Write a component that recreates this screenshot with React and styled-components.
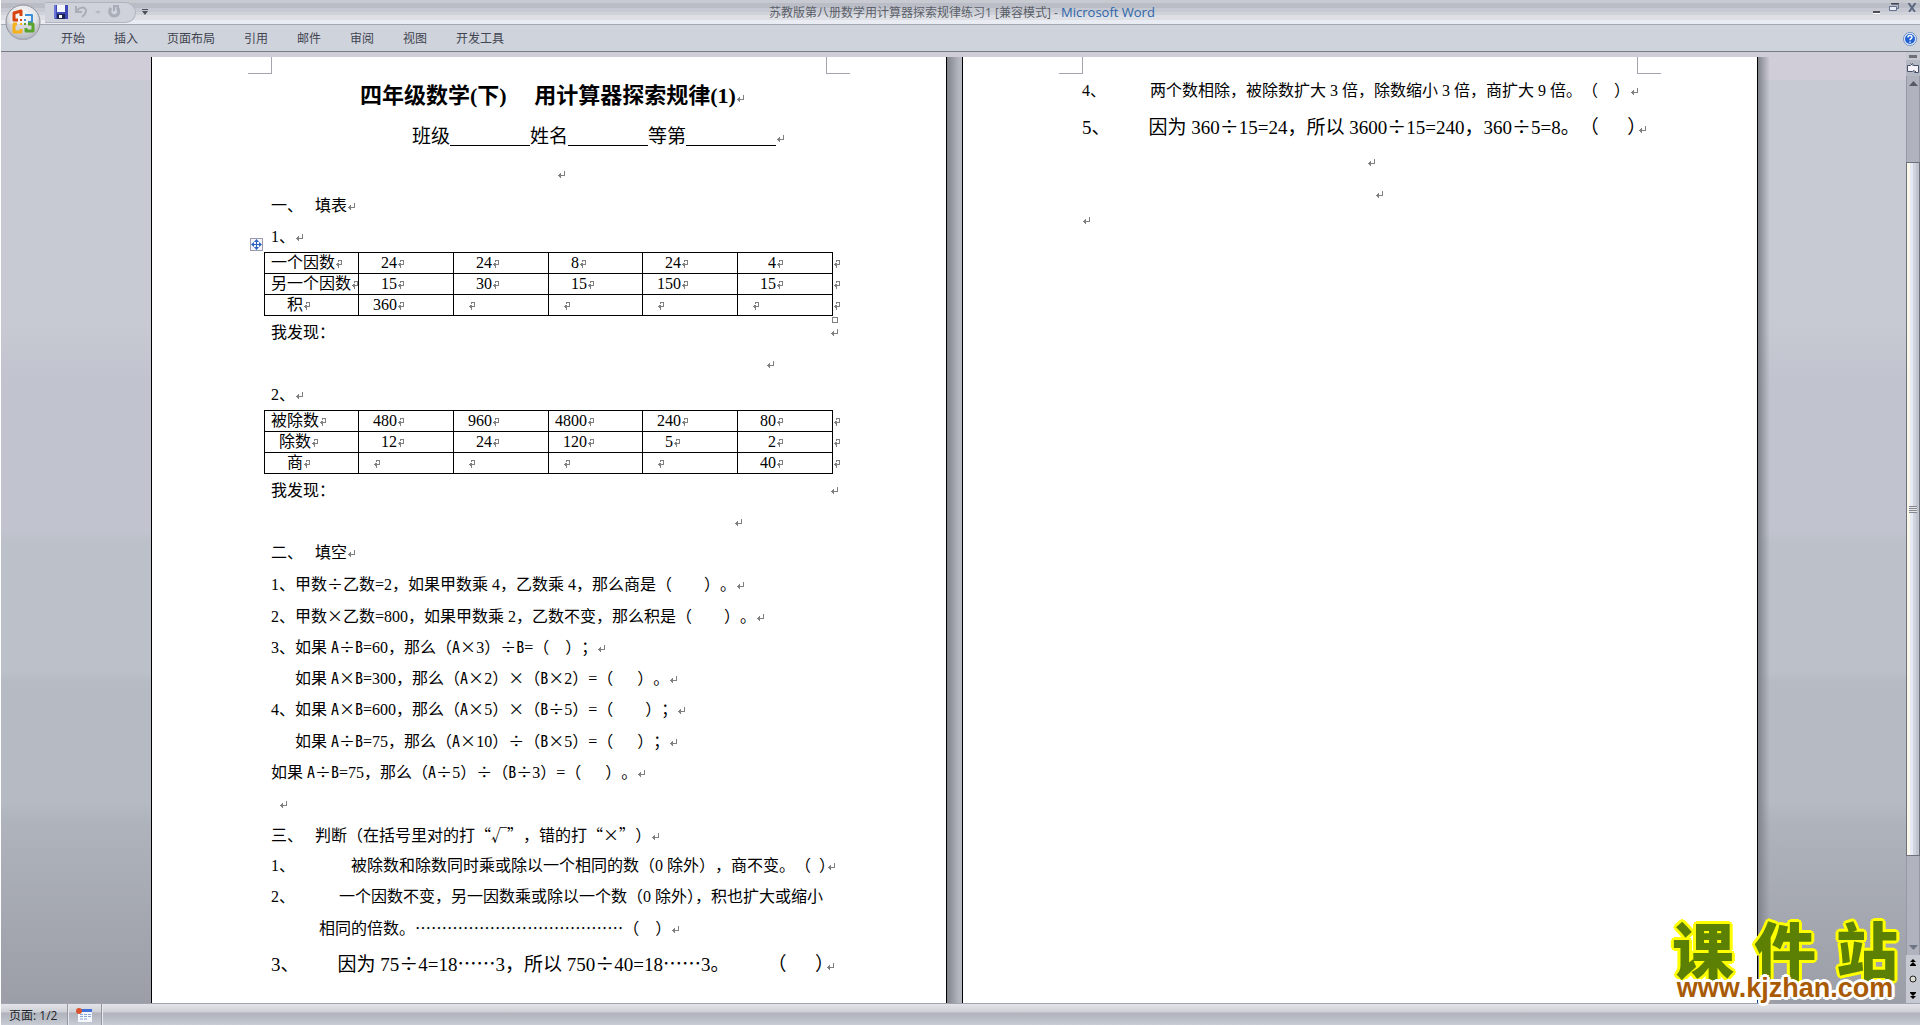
import styled, { createGlobalStyle, css } from "styled-components";

const GlobalStyle = createGlobalStyle`
  * {
    box-sizing: border-box;
  }
  body {
    margin: 0;
    overflow: hidden;
    font-family: "Open Sans", "Noto Sans CJK SC", sans-serif;
    font-size: 12px;
    color: #3f4450;
  }
  button {
    border: none;
    background: none;
    padding: 0;
    font: inherit;
    color: inherit;
    cursor: pointer;
  }
`;

const tabs = [
  "开始",
  "插入",
  "页面布局",
  "引用",
  "邮件",
  "审阅",
  "视图",
  "开发工具",
];

const factorRows = [
  ["一个因数", "  24", "  24", "  8", "  24", "   4"],
  ["另一个因数", "  15", "  30", "  15", " 150", "  15"],
  ["  积", " 360", " ", " ", " ", " "],
];

const divisionRows = [
  ["被除数", " 480", " 960", "4800", " 240", "  80"],
  [" 除数", "  12", "  24", " 120", "  5", "   2"],
  ["  商", " ", " ", " ", " ", "  40"],
];

function OfficeLogo() {
  return (
    <svg width="36" height="37" viewBox="0 0 36 37">
      <defs>
        <radialGradient id="orb" cx="50%" cy="35%" r="65%">
          <stop offset="0" stopColor="#ffffff" />
          <stop offset="0.6" stopColor="#e3e4e8" />
          <stop offset="1" stopColor="#a9acb4" />
        </radialGradient>
      </defs>
      <circle cx="18" cy="19" r="17" fill="#8b8e96" />
      <circle cx="18" cy="18" r="17" fill="url(#orb)" stroke="#8f929a" />
      <path d="M2 20h32a16 16 0 0 1-32 0z" fill="#c4c6cd" opacity="0.5" />
      <g fill="none" strokeWidth="3" strokeLinejoin="round">
        <path d="M13 16H9V9l7-2v5" stroke="#d8440f" />
        <path d="M20 11h7v7h-4" stroke="#3d8fd6" strokeWidth="2" />
        <path d="M12 20H9v8h7v-3" stroke="#f5b01a" />
        <path d="M23 20h5v7h-7v-3" stroke="#57a32c" />
      </g>
      <g>
        <rect x="15" y="15" width="2" height="2" fill="#d8440f" />
        <rect x="19" y="15" width="2" height="2" fill="#3d8fd6" />
        <rect x="15" y="19" width="2" height="2" fill="#f5b01a" />
        <rect x="19" y="19" width="2" height="2" fill="#57a32c" />
      </g>
    </svg>
  );
}

function SaveIcon() {
  return (
    <svg width="14" height="14" viewBox="0 0 14 14">
      <path d="M0 0h14v14H1l-1-1z" fill="#3d48b5" />
      <path d="M0 0h2v13H0z" fill="#6a76d8" />
      <path d="M3 0h8v7H3z" fill="#f4f6ff" />
      <path d="M3 9h8v5H3z" fill="#1d2350" />
      <path d="M5 10h3v3H5z" fill="#ffffff" />
    </svg>
  );
}

function UndoIcon() {
  return (
    <svg width="13" height="13" viewBox="0 0 13 13" fill="none" stroke="#a9adb8">
      <path d="M1 1v6h6" strokeWidth="2" />
      <path d="M2 6c2-4 9-5 9 0 0 3-2 4-4 6" strokeWidth="2" />
    </svg>
  );
}

function RedoIcon() {
  return (
    <svg width="13" height="13" viewBox="0 0 13 13" fill="none" stroke="#a9adb8">
      <path d="M3 3c-3 4 0 8 3 8 5 0 6-5 3-9" strokeWidth="3" />
      <path d="M6 6V1h5" strokeWidth="2" />
    </svg>
  );
}

function ReturnMark({ tuck }) {
  return (
    <Mark $tuck={tuck} width="8" height="8" viewBox="0 0 8 8">
      <path d="M7.5 0v4.5H2M3.5 2v5M2.5 3v3M1.5 4v1" />
    </Mark>
  );
}

function CellMark() {
  return (
    <Mark width="8" height="8" viewBox="0 0 8 8">
      <path d="M3.5 2V.5h3v4H2M3.5 2.500v5M2.500 3v3M1.5 4v1" />
    </Mark>
  );
}

// Latin letters take half a character and operators a whole one
function Text({ children }) {
  return children.split(/([AB]+|[÷×…“”√])/).map((part, i) => {
    if (/^[AB]/.test(part)) return <Half key={i}>{part}</Half>;
    if (/^[÷×…“”√]/.test(part)) return <Wide key={i}>{part}</Wide>;
    return part;
  });
}

function Para({ children = "", line, size, indent, space, open, tuck, trim }) {
  return (
    <Line
      $line={line}
      $size={size}
      $indent={indent}
      $space={space}
      $trim={trim}
    >
      <Text>{children}</Text>
      {!open && <ReturnMark tuck={tuck} />}
    </Line>
  );
}

function Sheet({ rows, label, active }) {
  return (
    <TableWrap>
      {active && (
        <MoveHandle aria-label="移动表格">
          <svg width="11" height="11" viewBox="0 0 11 11" fill="#2a62c4">
            <path d="M5 1h1v9H5zM1 5h9v1H1zM5.500 0l2.500 3H3zM5.500 11L3 8h5zM0 5.500L3 3v5zM11 5.500L8 8V3z" />
          </svg>
        </MoveHandle>
      )}
      <Table aria-label={label}>
        <colgroup>
          <col width="94" />
          <col width="95" />
          <col width="95" />
          <col width="94" />
          <col width="95" />
          <col width="95" />
          <col width="16" />
        </colgroup>
        <tbody>
          {rows.map((row) => (
            <tr key={row[0]}>
              {row.map((cell, i) => (
                <Cell key={i}>
                  {cell.replace(/ /g, "  ")}
                  <CellMark />
                </Cell>
              ))}
              <RowEnd>
                <CellMark />
              </RowEnd>
            </tr>
          ))}
        </tbody>
      </Table>
      {active && <SizeHandle />}
    </TableWrap>
  );
}

function Finding() {
  return (
    <FindingLine>
      <span>我发现：</span>
      <ReturnMark />
    </FindingLine>
  );
}

function App() {
  return (
    <Window>
      <GlobalStyle />
      <TitleBar>
        <QuickAccess>
          <button aria-label="保存">
            <SaveIcon />
          </button>
          <button aria-label="撤消">
            <UndoIcon />
          </button>
          <SmallArrow $color="#b4b7c0" />
          <button aria-label="恢复">
            <RedoIcon />
          </button>
        </QuickAccess>
        <MoreButton aria-label="自定义快速访问工具栏">
          <svg width="6" height="6" viewBox="0 0 6 6" fill="#4c505a">
            <path d="M0 0h6v1H0zM0 2h6L3 6z" />
          </svg>
        </MoreButton>
        <Caption>
          苏教版第八册数学用计算器探索规律练习1 [兼容模式] -{" "}
          <AppName>Microsoft Word</AppName>
        </Caption>
        <WindowButtons>
          <button aria-label="最小化">
            <svg width="9" height="11" viewBox="0 0 9 11">
              <path d="M1 8h7v2H1z" fill="#4b4e57" />
              <path d="M1 10h7v1H1z" fill="#fff" />
            </svg>
          </button>
          <button aria-label="还原">
            <svg width="10" height="9" viewBox="0 0 10 9" fill="none" stroke="#66708a">
              <path d="M2.500 1.500h7v4h-2" />
              <path d="M2 .5h8" stroke="#43464e" />
              <path d="M.5 3.500h7v4h-7z" fill="#e8ecf6" />
            </svg>
          </button>
          <button aria-label="关闭">
            <svg width="10" height="10" viewBox="0 0 10 10" fill="none">
              <path d="M1 10h3M6 10h3" stroke="#fff" />
              <path d="M1.500 0l6.500 9M8.500 0L2 9" stroke="#5c6580" strokeWidth="2" />
            </svg>
          </button>
        </WindowButtons>
      </TitleBar>
      <OfficeButton aria-label="Office 按钮">
        <OfficeLogo />
      </OfficeButton>

      <Ribbon>
        {tabs.map((tab) => (
          <Tab key={tab}>{tab}</Tab>
        ))}
        <HelpButton aria-label="帮助">
          <svg width="14" height="14" viewBox="0 0 14 14">
            <circle cx="7" cy="7" r="6.500" fill="#e9f1ff" stroke="#6f8fc0" />
            <circle cx="7" cy="7" r="5" fill="#1f5fd0" />
            <path
              d="M5 5.500c0-2.500 4-2.500 4-.3C9 6.700 7 6.700 7 8.300M7 9.500v1.300"
              fill="none"
              stroke="#fff"
              strokeWidth="1.500"
            />
          </svg>
        </HelpButton>
      </Ribbon>

      <Body>
        <Desk>
          <Page>
            <Corner $side="left" />
            <Corner $side="right" />
            <Title>
              <Text>{"四年级数学(下)     用计算器探索规律(1)"}</Text>
              <ReturnMark />
            </Title>
            <Line $line={41} $size={19} $indent={141}>
              班级
              <Blank $w={80} />
              姓名
              <Blank $w={80} />
              等第
              <Blank $w={90} />
              <ReturnMark />
            </Line>
            <Para line={33} indent={286} />
            <Para>一、   填表</Para>
            <Para>1、</Para>
            <Sheet rows={factorRows} label="因数和积" active />
            <Finding />
            <Para indent={495} />
            <Para>2、</Para>
            <Sheet rows={divisionRows} label="被除数、除数和商" />
            <Finding />
            <Para indent={463} />
            <Para>二、   填空</Para>
            <Para>
              {"1、甲数÷乙数=2，如果甲数乘 4，乙数乘 4，那么商是（        ）。"}
            </Para>
            <Para space>
              {"2、甲数×乙数=800，如果甲数乘 2，乙数不变，那么积是（        ）。"}
            </Para>
            <Para>{"3、如果 A÷B=60，那么（A×3）÷B=（    ）；"}</Para>
            <Para>{"      如果 A×B=300，那么（A×2）×（B×2）=（      ）。"}</Para>
            <Para>
              {"4、如果 A×B=600，那么（A×5）×（B÷5）=（        ）；"}
            </Para>
            <Para space>
              {"      如果 A÷B=75，那么（A×10）÷（B×5）=（      ）；"}
            </Para>
            <Para>{"如果 A÷B=75，那么（A÷5）÷（B÷3）=（      ）。"}</Para>
            <Para space indent={8} />
            <Para>{"三、   判断（在括号里对的打“√”，错的打“×”）"}</Para>
            <Para tuck>
              {
                "1、              被除数和除数同时乘或除以一个相同的数（0 除外），商不变。（  ）"
              }
            </Para>
            <Para open trim>
              {
                "2、           一个因数不变，另一因数乘或除以一个数（0 除外），积也扩大或缩小"
              }
            </Para>
            <Para>
              {"            相同的倍数。…………………………………（    ）"}
            </Para>
            <Para line={39} size={19} tuck>
              {
                "3、        因为 75÷4=18……3，所以 750÷40=18……3。        （      ）"
              }
            </Para>
          </Page>
          <Gutter />
          <Page>
            <Corner $side="left" />
            <Corner $side="right" />
            <Para>
              {
                "4、           两个数相除，被除数扩大 3 倍，除数缩小 3 倍，商扩大 9 倍。（    ）"
              }
            </Para>
            <Para line={39} size={19} tuck>
              {
                "5、        因为 360÷15=24，所以 3600÷15=240，360÷5=8。（      ）"
              }
            </Para>
            <Para line={33} indent={285} />
            <Para indent={293} />
            <Para line={21} />
          </Page>
          <Gutter $fade />
        </Desk>
        <ScrollColumn>
          <SplitHandle />
          <RulerButton aria-label="标尺">
            <svg width="12" height="12" viewBox="0 0 12 12" fill="#f5f2fa" stroke="#46506a">
              <path d="M.5 3.500h3l2-2 1 2h5v7h-4l-1-2-1 1h-5z" />
              <path d="M3.500 1.500l2 2M7.500 8.500l2 2" />
            </svg>
          </RulerButton>
          <Track>
            <Arrow aria-label="向上滚动">
              <svg width="9" height="5" viewBox="0 0 9 5" fill="#555a66">
                <path d="M4.500 0L9 5H0z" />
              </svg>
            </Arrow>
            <Thumb>
              <Grip />
            </Thumb>
            <Arrow aria-label="向下滚动">
              <svg width="9" height="5" viewBox="0 0 9 5" fill="#6d7484">
                <path d="M0 0h9L4.500 5z" />
              </svg>
            </Arrow>
          </Track>
          <Browse>
            <button aria-label="前一页">
              <svg width="6" height="7" viewBox="0 0 6 7">
                <path d="M3 0l3 3H0zM3 3l3 3H0zM0 6h6v1H0z" />
              </svg>
            </button>
            <button aria-label="选择浏览对象">
              <svg width="8" height="8" viewBox="0 0 8 8">
                <circle cx="4" cy="4" r="3" fill="#d9dbd4" stroke="#222" />
              </svg>
            </button>
            <button aria-label="下一页">
              <svg width="6" height="7" viewBox="0 0 6 7">
                <path d="M3 7L0 4h6zM3 4L0 1h6zM0 0h6v1H0z" />
              </svg>
            </button>
          </Browse>
        </ScrollColumn>
      </Body>

      <StatusBar>
        <StatusItem $w={67}>页面: 1/2</StatusItem>
        <StatusItem $w={34}>
          <svg width="16" height="14" viewBox="0 0 16 14">
            <path d="M2 1h14v13H2z" fill="#f4f7fd" />
            <path d="M2 1h14v3H2z" fill="#3f6fd8" />
            <path
              d="M4 6.500h3M8 6.500h3M12 6.500h3M4 8.500h3M8 8.500h3M12 8.500h3M4 11h3M8 11h3"
              stroke="#8aa5d8"
            />
            <circle cx="3" cy="3" r="3" fill="#d9532c" />
          </svg>
        </StatusItem>
      </StatusBar>

      <Watermark>
        <SiteName>
          <span>课</span>
          <span>件</span>
          <span>站</span>
        </SiteName>
        <SiteUrl>www.kjzhan.com</SiteUrl>
      </Watermark>
    </Window>
  );
}

export default App;

const Window = styled.div`
  position: relative;
  display: flex;
  flex-direction: column;
  height: 100vh;
  border-left: 1px solid #fdfdfd;
  background-color: #d0cdd8;
`;

const TitleBar = styled.header`
  display: flex;
  align-items: center;
  height: 25px;
  padding-left: 44px;
  border-bottom: 1px solid #a4a7b2;
  background: linear-gradient(
    #c7cad1 0 3px,
    #babdc6 3px 8px,
    #c6c9d1 8px 12px,
    #d0d2d9 12px 15px,
    #dddfe4 15px 20px,
    #eaecf4 20px
  );
`;

const OfficeButton = styled.button`
  position: absolute;
  left: 4px;
  top: 4px;
  height: 37px;
`;

const QuickAccess = styled.div`
  display: flex;
  align-items: center;
  gap: 7px;
  width: 91px;
  height: 21px;
  padding-left: 9px;
  border: 1px solid #b2b5bf;
  border-left: none;
  border-radius: 0 11px 11px 0;
  background-color: #cfd2da;
  button {
    height: 14px;
  }
`;

const SmallArrow = styled.span`
  border: 3px solid transparent;
  border-top-color: ${(props) => props.$color};
  border-bottom: none;
`;

const MoreButton = styled.button`
  display: flex;
  margin-left: 6px;
`;

const Caption = styled.div`
  flex: 1;
  padding-right: 96px;
  text-align: center;
  white-space: pre;
  color: #5b5f69;
  line-height: 24px;
`;

const AppName = styled.span`
  font-size: 13px;
  color: #2c66ab;
`;

const WindowButtons = styled.div`
  display: flex;
  gap: 8px;
  padding-right: 3px;
  height: 18px;
  button {
    display: flex;
    align-items: flex-start;
  }
`;

const Ribbon = styled.nav`
  display: flex;
  align-items: center;
  gap: 29px;
  height: 27px;
  padding: 2px 0 0 60px;
  border-bottom: 1px solid #747a86;
  background-color: #cfd3dc;
`;

const Tab = styled.button`
  line-height: 20px;
`;

const HelpButton = styled.button`
  display: flex;
  margin-left: auto;
  margin-right: 3px;
`;

const Body = styled.div`
  display: flex;
  flex: 1;
  min-height: 0;
`;

const Desk = styled.main`
  display: flex;
  flex: 1;
  justify-content: center;
  padding: 5px 0 0 17px;
  background: linear-gradient(
    #d0cdd8 0 28px,
    #c7cad3 28px 270px,
    #c1c4ce 330px 480px,
    #bbc0c9 490px 620px,
    #b6bac3 630px 750px,
    #afb3bc 770px,
    #9b9ea7
  );
`;

const Page = styled.article`
  position: relative;
  width: 796px;
  padding: 18px 119px;
  border: 1px solid #000;
  border-width: 0 1px;
  background-color: #fff;
  color: #000;
  font-family: "Liberation Serif", "Noto Sans CJK SC", serif;
`;

const Gutter = styled.div`
  width: 15px;
  background: ${(props) =>
    props.$fade
      ? "linear-gradient(to right, #80838a, transparent 12px)"
      : "linear-gradient(to right, #80838a, #b4b7c0 12px)"};
`;

const Corner = styled.span`
  position: absolute;
  top: 0;
  width: 24px;
  height: 17px;
  border-bottom: 1px solid #a4a5b1;
  ${(props) =>
    props.$side === "left"
      ? css`
          left: 96px;
          border-right: 1px solid #a4a5b1;
        `
      : css`
          right: 96px;
          border-left: 1px solid #a4a5b1;
        `}
`;

const Line = styled.p`
  margin: 0;
  padding-left: ${(props) => props.$indent || 0}px;
  padding-top: ${(props) => (props.$space ? 1 : 0)}px;
  height: ${(props) => (props.$line || 31) + (props.$space ? 1 : 0)}px;
  line-height: ${(props) => props.$line || 31}px;
  font-size: ${(props) => props.$size || 16}px;
  white-space: pre;
  text-spacing-trim: ${(props) => (props.$trim ? "normal" : "space-all")};
`;

const Title = styled.h1`
  margin: 0;
  padding-left: 89px;
  height: 41px;
  line-height: 41px;
  font-size: 22px;
  white-space: pre;
`;

const FindingLine = styled(Line)`
  display: flex;
  justify-content: space-between;
  align-items: center;
  margin-right: -11px;
`;

const Blank = styled.span`
  display: inline-block;
  width: ${(props) => props.$w}px;
  height: 16px;
  vertical-align: -3px;
  border-bottom: 1px solid #000;
`;

const Half = styled.span`
  font-family: "Noto Sans CJK SC", sans-serif;
  font-feature-settings: "hwid";
`;

const Wide = styled.span`
  font-family: "Noto Sans CJK SC", sans-serif;
`;

const Mark = styled.svg`
  fill: none;
  stroke: #808080;
  shape-rendering: crispEdges;
  margin-left: ${(props) => (props.$tuck ? -8 : 0)}px;
`;

const TableWrap = styled.div`
  position: relative;
  margin: 0 -24px 1px -7px;
`;

const Table = styled.table`
  table-layout: fixed;
  width: 584px;
  border-collapse: collapse;
  font-size: 16px;
`;

const Cell = styled.td`
  height: 21px;
  padding: 0 0 0 6px;
  border: 1px solid #000;
  line-height: 20px;
  white-space: pre;
  overflow: hidden;
`;

const RowEnd = styled.td`
  padding: 0;
  line-height: 20px;
`;

const MoveHandle = styled.button`
  position: absolute;
  left: -14px;
  top: -14px;
  display: flex;
  border: 1px solid #9a9cae;
  background-color: #f4f5fb;
`;

const SizeHandle = styled.span`
  position: absolute;
  left: 568px;
  top: 65px;
  width: 6px;
  height: 6px;
  border: 1px solid #808080;
`;

const ScrollColumn = styled.aside`
  display: flex;
  flex-direction: column;
  align-items: center;
  width: 14px;
  background-color: #c6c9d2;
`;

const SplitHandle = styled.div`
  width: 8px;
  height: 3px;
  margin: 3px 0 2px;
  background-color: #6d6f76;
`;

const RulerButton = styled.button`
  display: flex;
  align-items: center;
  justify-content: center;
  width: 14px;
  height: 16px;
  background-color: #b4b8c2;
`;

const Track = styled.div`
  display: flex;
  flex-direction: column;
  flex: 1;
  width: 14px;
  border: 1px solid #9699a3;
  border-width: 0 1px;
  background-color: #b0b3bd;
`;

const Arrow = styled.button`
  display: flex;
  justify-content: center;
  padding: 5px 0;
  &:last-child {
    margin-top: auto;
  }
`;

const Thumb = styled.div`
  display: flex;
  align-items: center;
  justify-content: center;
  height: 79%;
  margin: 71px -1px 0;
  border: 1px solid #6d717b;
  background: linear-gradient(
    to right,
    #fbf8ea 0 3px,
    #e6eaf5 3px 6px,
    #cfd4df 6px 9px,
    #bfc4cf 9px
  );
`;

const Grip = styled.div`
  width: 8px;
  height: 7px;
  background: repeating-linear-gradient(#83868c 0 1px, #e6e8ee 1px 2px);
`;

const Browse = styled.div`
  display: flex;
  flex-direction: column;
  align-items: center;
  justify-content: space-around;
  height: 48px;
  button {
    display: flex;
  }
`;

const StatusBar = styled.footer`
  display: flex;
  height: 22px;
  border-top: 1px solid #a0a3ad;
  background: linear-gradient(
    #e2e4e9,
    #cdd0d6 8px,
    #b0b3bb 9px,
    #bcc0c9 16px,
    #c9ccd5
  );
  color: #22252c;
`;

const StatusItem = styled.div`
  display: flex;
  align-items: center;
  width: ${(props) => props.$w}px;
  padding-left: 8px;
  border-right: 1px solid #9497a1;
  box-shadow: 1px 0 #e6e8ec;
`;

const Watermark = styled.div`
  position: absolute;
  right: 22px;
  bottom: 24px;
  width: 226px;
  font-weight: 900;
`;

const SiteName = styled.div`
  display: flex;
  justify-content: space-between;
  font-family: "Noto Sans CJK SC", sans-serif;
  font-size: 62px;
  line-height: 54px;
  color: #5b8003;
  text-shadow:
    3px 0 #ff0,
    -3px 0 #ff0,
    0 3px #ff0,
    0 -3px #ff0,
    2px 2px #ff0,
    -2px 2px #ff0,
    2px -2px #ff0,
    -2px -2px #ff0;
`;

const SiteUrl = styled.div`
  position: relative;
  font-family: "Liberation Sans", sans-serif;
  font-size: 27px;
  line-height: 26px;
  text-align: center;
  color: #a85a04;
  text-shadow:
    3px 0 #fff,
    -3px 0 #fff,
    0 3px #fff,
    0 -3px #fff,
    2px 2px #fff,
    -2px 2px #fff,
    2px -2px #fff,
    -2px -2px #fff;
`;
